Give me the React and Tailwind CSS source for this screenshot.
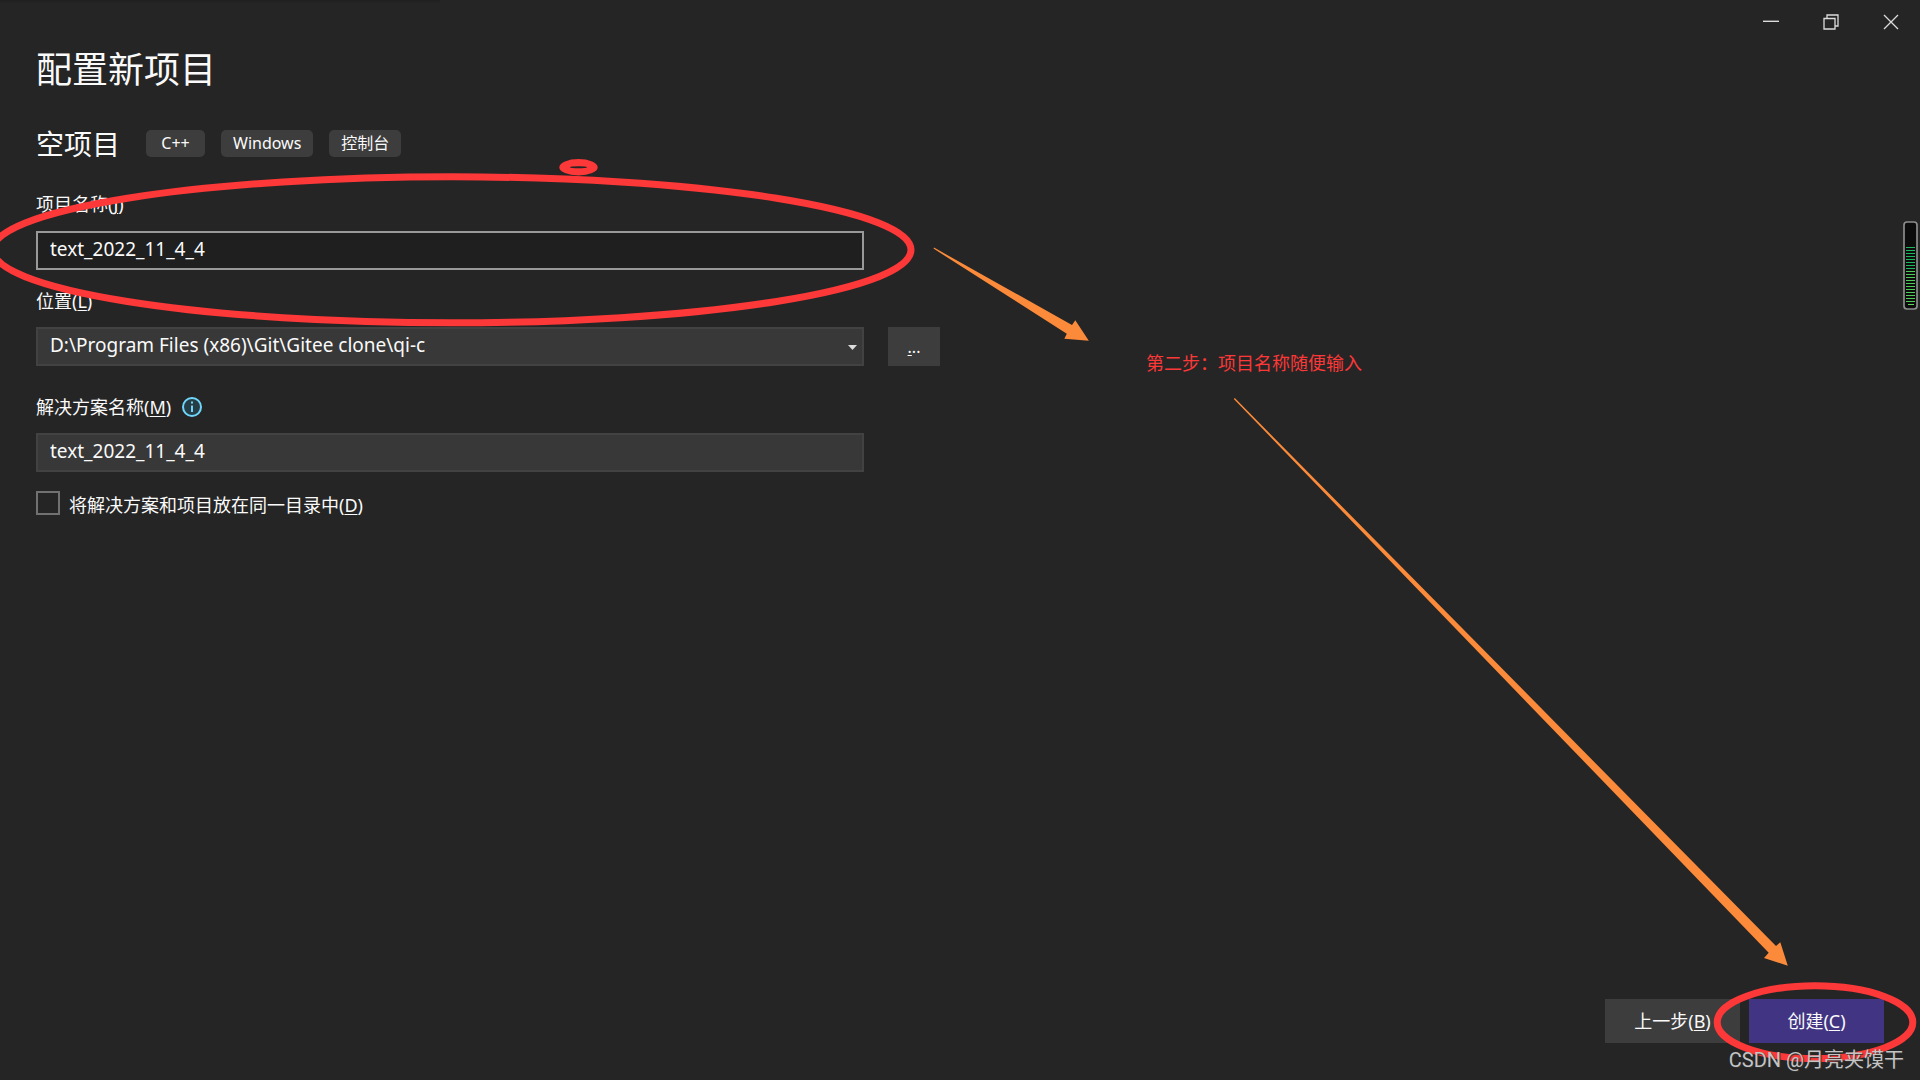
import React, { useState } from 'react';

const tags = ['C++', 'Windows', '控制台'];
const meterLines = Array.from({ length: 19 }, (_, i) => 247 + i * 3);

const Mnemonic = ({ text, letter }) => (
  <>
    {text}(<span className="underline decoration-1 underline-offset-2">{letter}</span>)
  </>
);

const TitleBar = () => (
  <header className="flex h-[46px] justify-end gap-11 pr-[21px] pt-[14px]">
    <button type="button" aria-label="最小化" className="h-4 w-4">
      <svg width="16" height="16" viewBox="0 0 16 16" fill="none" stroke="#dcdcdc">
        <path d="M0 7.3h16" strokeWidth="1.4" />
      </svg>
    </button>
    <button type="button" aria-label="还原" className="h-4 w-4">
      <svg width="16" height="16" viewBox="0 0 16 16" fill="none" stroke="#dcdcdc" strokeWidth="1.3">
        <path d="M1 4.5h11v10.5H1zM4 4.5V1h11v11h-3" />
      </svg>
    </button>
    <button type="button" aria-label="关闭" className="h-4 w-4">
      <svg width="16" height="16" viewBox="0 0 16 16" fill="none" stroke="#dcdcdc" strokeWidth="1.3">
        <path d="M1 1l14 14M15 1L1 15" />
      </svg>
    </button>
  </header>
);

const Annotations = () => (
  <>
    <svg
      className="pointer-events-none absolute left-0 top-0"
      width="1920"
      height="1080"
      viewBox="0 0 1920 1080"
      fill="none"
      aria-hidden="true"
    >
      <ellipse cx="452" cy="249.8" rx="459" ry="73" stroke="#fc3838" strokeWidth="7" />
      <path
        d="M559.3 167.3a19.2 8.2 0 1 0 38.4 0a19.2 8.2 0 1 0-38.4 0zM570 167.3a8.5 1 0 1 0 17 0a8.5 1 0 1 0-17 0z"
        fill="#fc3838"
        fillRule="evenodd"
      />
      <ellipse cx="1815" cy="1022.2" rx="97.8" ry="36.4" stroke="#fc3838" strokeWidth="7" />
      <path
        d="M933.5 248.6L1066.8 333.8L1064.3 338.8L1088.8 340.8L1075.3 320.3L1072 325L934 247.6z"
        fill="#fb8a3a"
      />
      <path
        d="M1233.8 399L1768.7 952.7L1764 958L1787.8 965.8L1780.3 942.3L1776 946L1234.8 398z"
        fill="#fb8a3a"
      />

      {/* level meter */}
      <rect x="1904" y="222" width="13" height="87" rx="3" fill="#0c0c0c" stroke="#8c8c8c" strokeWidth="1.7" />
      {meterLines.map((y) => (
        <path key={y} d={`M1906 ${y + 0.5}h9`} stroke={y > 270 ? '#4fcb58' : '#1cb860'} />
      ))}
      <path d="M1908 304.5h6" stroke="#62d65c" />
    </svg>
    <p className="absolute left-[1146px] top-[349px] text-lg leading-7 text-[#fc3838]">
      第二步：项目名称随便输入
    </p>
    <p className="absolute bottom-1 right-4 font-['Roboto','Noto_Sans_CJK_SC',sans-serif] text-xl leading-8 text-[#c4c4c4] [text-shadow:1px_1px_1px_#333]">
      CSDN @月亮夹馍干
    </p>
  </>
);

const App = () => {
  const [projectName, setProjectName] = useState('text_2022_11_4_4');
  const [solutionName, setSolutionName] = useState('text_2022_11_4_4');
  const [sameDir, setSameDir] = useState(false);

  return (
    <div className="relative flex min-h-screen flex-col overflow-hidden bg-[#252525] font-['Noto_Sans','Noto_Sans_CJK_SC',sans-serif] text-lg leading-6 text-[#fafafa]">
      <div className="absolute left-0 top-0 h-1 w-[440px] bg-gradient-to-b from-[#202020] to-[#252525]" />
      <TitleBar />

      <main className="flex-1 px-9">
        <h1 className="text-4xl leading-[48px]">配置新项目</h1>

        <div className="mt-[30px] flex items-center gap-4">
          <h2 className="mr-2.5 text-[28px] leading-10">空项目</h2>
          {tags.map((tag) => (
            <span
              key={tag}
              className="mb-px h-[27px] min-w-[59px] rounded-[5px] bg-[#3d3d3d] px-3 text-center text-base leading-[27px]"
            >
              {tag}
            </span>
          ))}
        </div>

        <form className="mt-7" onSubmit={(e) => e.preventDefault()}>
          <label htmlFor="project" className="block">
            <Mnemonic text="项目名称" letter="J" />
          </label>
          <input
            id="project"
            type="text"
            className="mt-[15px] block h-[39px] w-full max-w-[828px] border-2 border-[#999999] bg-[#1f1f1f] px-3 pb-1 text-[19px] outline-none"
            value={projectName}
            onChange={(e) => setProjectName(e.target.value)}
          />

          <label htmlFor="location" className="mt-[19px] block">
            <Mnemonic text="位置" letter="L" />
          </label>
          <div className="mt-[14px] flex gap-6">
            <div className="relative w-full max-w-[828px]">
              <select
                id="location"
                className="block h-[39px] w-full appearance-none border-2 border-[#424242] bg-[#383838] px-3 pb-1 text-[19px] outline-none"
              >
                <option>D:\Program Files (x86)\Git\Gitee clone\qi-c</option>
              </select>
              <svg className="pointer-events-none absolute right-[7px] top-[18px]" width="9" height="5" viewBox="0 0 9 5">
                <path d="M0 0h9L4.5 5z" fill="#dcdcdc" />
              </svg>
            </div>
            <button type="button" aria-label="浏览" className="h-[39px] w-[52px] bg-[#3d3d3d] text-base">
              <span className="underline underline-offset-2">.</span>..
            </button>
          </div>

          <div className="mt-[29px] flex items-center gap-[11px]">
            <label htmlFor="solution">
              <Mnemonic text="解决方案名称" letter="M" />
            </label>
            <svg width="20" height="20" viewBox="0 0 20 20" fill="none" stroke="#6fd6fb">
              <circle cx="10" cy="10" r="9" strokeWidth="2" fill="#263d45" />
              <path d="M10 8.5V15M10 4.5v2" strokeWidth="2" />
            </svg>
          </div>
          <input
            id="solution"
            type="text"
            className="mt-[14px] block h-[39px] w-full max-w-[828px] border-2 border-[#424242] bg-[#383838] px-3 pb-1 text-[19px] outline-none"
            value={solutionName}
            onChange={(e) => setSolutionName(e.target.value)}
          />

          <div className="mt-[19px] flex items-start gap-[9px]">
            <input
              id="same-dir"
              type="checkbox"
              className="h-6 w-6 appearance-none border-2 border-[#717171] checked:bg-[#413482]"
              checked={sameDir}
              onChange={(e) => setSameDir(e.target.checked)}
            />
            <label htmlFor="same-dir" className="pt-0.5">
              <Mnemonic text="将解决方案和项目放在同一目录中" letter="D" />
            </label>
          </div>
        </form>
      </main>

      <footer className="flex justify-end gap-[9px] px-9 pb-[37px]">
        <button type="button" className="h-11 w-[135px] bg-[#3d3d3d]">
          <Mnemonic text="上一步" letter="B" />
        </button>
        <button type="button" className="h-11 w-[135px] bg-[#413482]">
          <Mnemonic text="创建" letter="C" />
        </button>
      </footer>

      <Annotations />
    </div>
  );
};

export default App;
